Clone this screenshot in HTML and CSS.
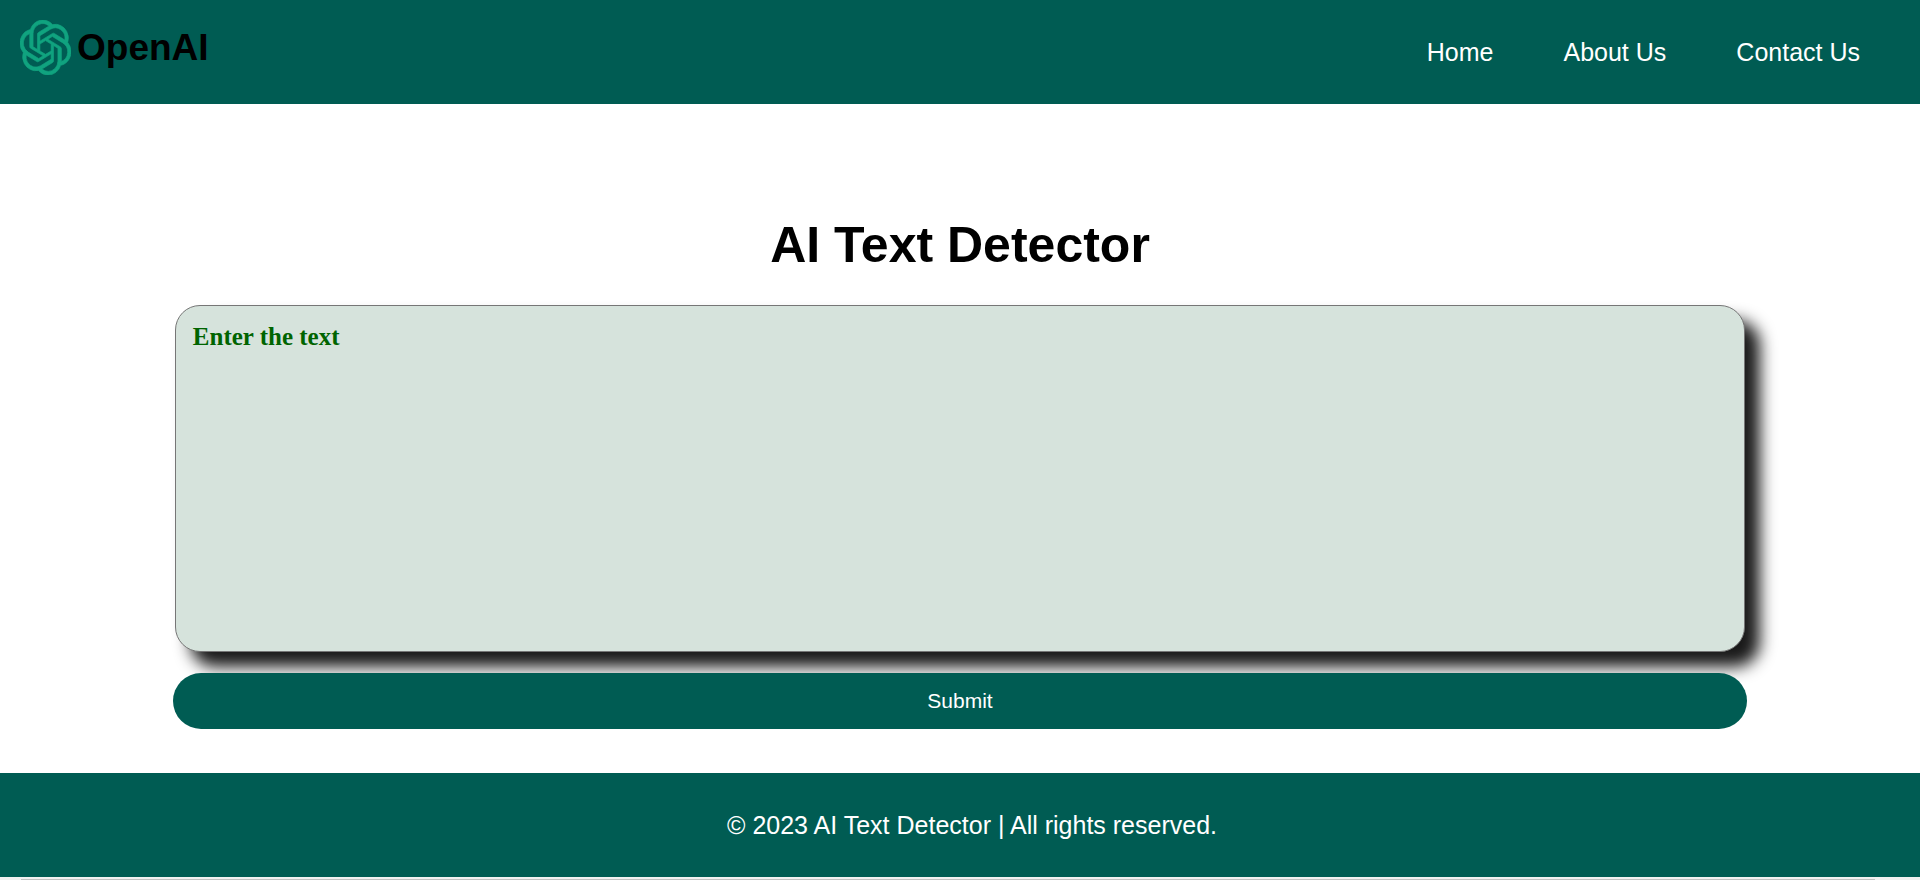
FILE: index.html
```html
<!DOCTYPE html>
<html lang="en">
<head>
<meta charset="utf-8">
<meta name="viewport" content="width=device-width, initial-scale=1">
<title>AI Text Detector</title>
<link rel="stylesheet" href="styles.css">
</head>
<body>
<header class="site-header">
  <a class="brand" href="#">
    <svg class="brand-mark" viewBox="0.2 0 23.6 24" preserveAspectRatio="none" aria-hidden="true"><path d="M22.2819 9.8211a5.9847 5.9847 0 0 0-.5157-4.9108 6.0462 6.0462 0 0 0-6.5098-2.9A6.0651 6.0651 0 0 0 4.9807 4.1818a5.9847 5.9847 0 0 0-3.9977 2.9 6.0462 6.0462 0 0 0 .7427 7.0966 5.98 5.98 0 0 0 .511 4.9107 6.051 6.051 0 0 0 6.5146 2.9001A5.9847 5.9847 0 0 0 13.2599 24a6.0557 6.0557 0 0 0 5.7718-4.2058 5.9894 5.9894 0 0 0 3.9977-2.9001 6.0557 6.0557 0 0 0-.7475-7.0729zm-9.022 12.6081a4.4755 4.4755 0 0 1-2.8764-1.0408l.1419-.0804 4.7783-2.7582a.7948.7948 0 0 0 .3927-.6813v-6.7369l2.02 1.1686a.071.071 0 0 1 .038.052v5.5826a4.504 4.504 0 0 1-4.4945 4.4944zm-9.6607-4.1254a4.4708 4.4708 0 0 1-.5346-3.0137l.142.0852 4.783 2.7582a.7712.7712 0 0 0 .7806 0l5.8428-3.3685v2.3324a.0804.0804 0 0 1-.0332.0615L9.74 19.9502a4.4992 4.4992 0 0 1-6.1408-1.6464zM2.3408 7.8956a4.485 4.485 0 0 1 2.3655-1.9728V11.6a.7664.7664 0 0 0 .3879.6765l5.8144 3.3543-2.0201 1.1685a.0757.0757 0 0 1-.071 0l-4.8303-2.7865A4.504 4.504 0 0 1 2.3408 7.872zm16.5963 3.8558L13.1038 8.364 15.1192 7.2a.0757.0757 0 0 1 .071 0l4.8303 2.7913a4.4944 4.4944 0 0 1-.6765 8.1042v-5.6772a.79.79 0 0 0-.407-.667zm2.0107-3.0231l-.142-.0852-4.7735-2.7818a.7759.7759 0 0 0-.7854 0L9.409 9.2297V6.8974a.0662.0662 0 0 1 .0284-.0615l4.8303-2.7866a4.4992 4.4992 0 0 1 6.6802 4.66zM8.3065 12.863l-2.02-1.1638a.0804.0804 0 0 1-.038-.0567V6.0742a4.4992 4.4992 0 0 1 7.3757-3.4537l-.142.0805L8.704 5.459a.7948.7948 0 0 0-.3927.6813zm1.0976-2.3654l2.602-1.4998 2.6069 1.4998v2.9994l-2.5974 1.4997-2.6067-1.4997Z"/></svg>
    <span>OpenAI</span>
  </a>
  <nav class="site-nav" aria-label="Main">
    <a href="#">Home</a>
    <a href="#about">About Us</a>
    <a href="#contact">Contact Us</a>
  </nav>
</header>
<main class="detector">
  <h1 class="title">AI Text Detector</h1>
  <form class="detector-form">
    <textarea class="text-input" aria-label="Enter the text" placeholder="Enter the text"></textarea>
    <button class="submit" type="button">Submit</button>
  </form>
</main>
<footer class="site-footer">
  <p>© 2023 AI Text Detector | All rights reserved.</p>
</footer>
<div class="scroll-track"><div class="scroll-thumb"></div></div>
</body>
</html>
```
FILE: styles.css
```css
* {
  box-sizing: border-box;
}

body {
  margin: 0;
  background: #fff;
  font-family: "Liberation Sans", Arial, sans-serif;
  font-size: 25px;
}

.site-header {
  display: flex;
  justify-content: space-between;
  align-items: center;
  height: 104px;
  padding: 0 60px 0 20px;
  background: #005c53;
}

.brand {
  display: flex;
  align-items: center;
  gap: 6px;
  padding-bottom: 9px;
  color: #000;
  font-size: 37px;
  font-weight: bold;
  text-decoration: none;
}

.brand-mark {
  width: 51px;
  height: 55px;
  fill: #10a37f;
  stroke: #10a37f;
  stroke-width: 0.3;
}

.site-nav {
  display: flex;
  gap: 70px;
}

.site-nav a {
  color: #fff;
  text-decoration: none;
}

.detector {
  width: 82%;
  margin: 0 auto;
  padding: 113px 0 44px;
}

.title {
  margin: 0 0 31px;
  font-size: 50px;
  line-height: 57px;
  text-align: center;
}

.detector-form {
  display: flex;
  flex-direction: column;
  gap: 20px;
}

.text-input {
  height: 347px;
  margin: 0 2px;
  padding: 17px;
  border: 1px solid #767676;
  border-radius: 25px;
  background: #d6e3dc;
  box-shadow: 15px 15px 16px #1a1a1a;
  color: #006400;
  font-family: "Liberation Serif", "Times New Roman", serif;
  font-size: 25px;
  font-weight: bold;
  resize: none;
}

.text-input::placeholder {
  color: #006400;
}

.submit {
  position: relative;
  height: 56px;
  margin-top: 1px;
  border: 0;
  border-radius: 28px;
  background: #005c53;
  color: #fff;
  font-family: inherit;
  font-size: 21px;
}

.site-footer {
  display: flex;
  justify-content: center;
  align-items: center;
  height: 104px;
  padding-left: 24px;
  background: #005c53;
  color: #fff;
}

.site-footer p {
  margin: 0;
}

.scroll-track {
  padding: 2px 45px 0 21px;
  background: #f1f1f1;
}

.scroll-thumb {
  height: 2px;
  background: #c1c1c1;
}
```
